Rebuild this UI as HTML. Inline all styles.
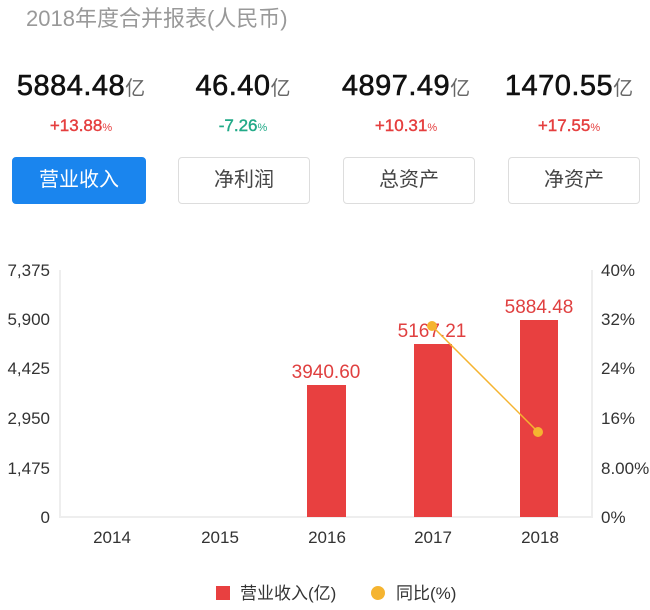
<!DOCTYPE html>
<html><head><meta charset="utf-8"><style>
body{margin:0;width:650px;height:610px;background:#fff;font-family:"Liberation Sans","Noto Sans CJK SC",sans-serif;position:relative;overflow:hidden}
.t{position:absolute;left:26px;top:1px;font-size:22px;color:#999}
.v{position:absolute;top:70px;width:162px;text-align:center;font-size:29px;color:#111;letter-spacing:0.5px;-webkit-text-stroke:0.6px #111}
.v small{font-size:20px;color:#666;letter-spacing:0;-webkit-text-stroke:0}
.p{position:absolute;top:116px;width:162px;text-align:center;font-size:17px;-webkit-text-stroke:0.4px currentColor}
.p small{font-size:11px;-webkit-text-stroke:0}
.b{position:absolute;top:157px;height:47px;width:132px;box-sizing:border-box;border:1px solid #ddd;border-radius:4px;text-align:center;line-height:45px;font-size:20px;color:#444}
</style></head><body>
<div class="t">2018年度合并报表(人民币)</div>
<div class="v" style="left:0">5884.48<small>亿</small></div>
<div class="v" style="left:162px">46.40<small>亿</small></div>
<div class="v" style="left:325px">4897.49<small>亿</small></div>
<div class="v" style="left:488px">1470.55<small>亿</small></div>
<div class="p" style="left:0;color:#e53e3e">+13.88<small>%</small></div>
<div class="p" style="left:162px;color:#22aa88">-7.26<small>%</small></div>
<div class="p" style="left:325px;color:#e53e3e">+10.31<small>%</small></div>
<div class="p" style="left:488px;color:#e53e3e">+17.55<small>%</small></div>
<div class="b" style="left:12px;width:134px;background:#1a85ee;border-color:#1a85ee;color:#fff">营业收入</div>
<div class="b" style="left:178px">净利润</div>
<div class="b" style="left:343px">总资产</div>
<div class="b" style="left:508px">净资产</div>
<svg width="650" height="610" style="position:absolute;left:0;top:0" font-family="Liberation Sans, Noto Sans CJK SC, sans-serif">
<g stroke="#eee" stroke-width="2"><line x1="60" y1="270" x2="60" y2="518"/><line x1="592" y1="270" x2="592" y2="518"/><line x1="60" y1="517" x2="592" y2="517"/></g>
<g font-size="17" fill="#333" text-anchor="end">
<text x="50" y="276">7,375</text><text x="50" y="325">5,900</text><text x="50" y="374">4,425</text><text x="50" y="424">2,950</text><text x="50" y="474">1,475</text><text x="50" y="523">0</text></g>
<g font-size="17" fill="#333">
<text x="601" y="276">40%</text><text x="601" y="325">32%</text><text x="601" y="374">24%</text><text x="601" y="424">16%</text><text x="601" y="474">8.00%</text><text x="601" y="523">0%</text></g>
<g fill="#e84040"><rect x="307" y="385" width="39" height="132"/><rect x="414" y="344" width="38" height="173"/><rect x="520" y="320" width="38" height="197"/></g>
<g font-size="19" fill="#e04040" text-anchor="middle"><text x="326" y="378">3940.60</text><text x="432" y="337">5167.21</text><text x="539" y="313">5884.48</text></g>
<line x1="432" y1="326" x2="538" y2="432" stroke="#f5b430" stroke-width="1.5"/>
<circle cx="432" cy="326" r="5" fill="#f5b430"/><circle cx="538" cy="432" r="5" fill="#f5b430"/>
<g font-size="17" fill="#333" text-anchor="middle"><text x="112" y="543">2014</text><text x="220" y="543">2015</text><text x="327" y="543">2016</text><text x="433" y="543">2017</text><text x="540" y="543">2018</text></g>
<rect x="216" y="586" width="14" height="14" fill="#e84040"/>
<text x="240" y="599" font-size="17" fill="#333">营业收入(亿)</text>
<circle cx="378" cy="593" r="7" fill="#f5b430"/>
<text x="396" y="599" font-size="17" fill="#333">同比(%)</text>
</svg>
</body></html>
